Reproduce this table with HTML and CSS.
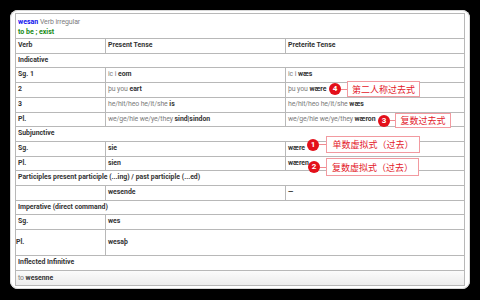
FILE: index.html
```html
<!DOCTYPE html>
<html>
<head>
<meta charset="utf-8">
<link rel="stylesheet" href="styles.css">
</head>
<body>
<div class="stage">
  <div class="panel">
    <div class="box">
      <div class="title">
        <div><span class="word">wesan</span> <span class="muted">Verb irregular</span></div>
        <div class="gloss">to be ; exist</div>
      </div>
      <table class="conj">
        <colgroup><col class="c1"><col class="c2"><col class="c3"></colgroup>
        <tr><td class="b">Verb</td><td class="b">Present Tense</td><td class="b">Preterite Tense</td></tr>
        <tr><td class="b" colspan="3">Indicative</td></tr>
        <tr><td class="b">Sg. 1</td><td><span class="muted">ic i</span> <b>eom</b></td><td><span class="muted">ic i</span> <b>wæs</b></td></tr>
        <tr><td class="b">2</td><td><span class="muted">þu you</span> <b>eart</b></td><td><span class="muted">þu you</span> <b>wære</b></td></tr>
        <tr><td class="b">3</td><td><span class="muted">he/hit/heo he/it/she</span> <b>is</b></td><td><span class="muted">he/hit/heo he/it/she</span> <b>wæs</b></td></tr>
        <tr><td class="b">Pl.</td><td><span class="muted">we/ge/hie we/ye/they</span> <b>sind|sindon</b></td><td><span class="muted">we/ge/hie we/ye/they</span> <b>wæron</b></td></tr>
        <tr><td class="b" colspan="3">Subjunctive</td></tr>
        <tr><td class="b">Sg.</td><td class="b">sie</td><td class="b">wære</td></tr>
        <tr><td class="b">Pl.</td><td class="b">sien</td><td class="b">wæren</td></tr>
        <tr><td class="b" colspan="3">Participles present participle (...ing) / past participle (...ed)</td></tr>
        <tr><td></td><td class="b">wesende</td><td class="b">—</td></tr>
        <tr><td class="b" colspan="3">Imperative (direct command)</td></tr>
        <tr><td class="b">Sg.</td><td class="b" colspan="2">wes</td></tr>
        <tr class="tall"><td class="b flush">Pl.</td><td class="b" colspan="2">wesaþ</td></tr>
        <tr><td class="b" colspan="3">Inflected Infinitive</td></tr>
        <tr class="foot"><td colspan="3"><span class="muted">to</span> <b>wesenne</b></td></tr>
      </table>
    </div>
  </div>

  <div class="note n4"><span class="dot">4</span><span class="wire"></span><span class="tag">第二人称过去式</span></div>
  <div class="note n3"><span class="dot">3</span><span class="wire"></span><span class="tag">复数过去式</span></div>
  <div class="note n1"><span class="dot">1</span><span class="wire"></span><span class="tag">单数虚拟式（过去）</span></div>
  <div class="note n2"><span class="dot">2</span><span class="wire"></span><span class="tag">复数虚拟式（过去）</span></div>
</div>
</body>
</html>
```

FILE: styles.css
```css
html, body {
  margin: 0;
  padding: 0;
  background: #000;
}
.stage {
  position: relative;
  width: 480px;
  height: 300px;
  overflow: hidden;
  font-family: Roboto, "Liberation Sans", Arial, sans-serif;
}
.panel {
  margin: 10px 0 0 10px;
  width: 460px;
  box-sizing: border-box;
  padding: 3px 4px 3px 5px;
  background: #fff;
  border-radius: 8px;
  box-shadow: inset 0 0 0 1px #d8d8d8;
}
.box {
  border: 1px solid #b8b8b8;
  width: 450px;
  box-sizing: border-box;
}
.title {
  padding: 4px 2px 1px;
  font-size: 7px;
  line-height: 9.5px;
}
.word { color: #1010ee; font-weight: 700; }
.gloss { color: #168a16; font-weight: 700; }
.muted { color: #7d7d7d; font-weight: 400; letter-spacing: -0.12px; }
.conj {
  width: 100%;
  border-collapse: separate;
  border-spacing: 0;
  font-size: 6.9px;
  table-layout: fixed;
}
.c1 { width: 89px; }
.c2 { width: 180px; }
.conj td {
  border-top: 1px solid #b8b8b8;
  padding: 0 2px;
  line-height: 13.7px;
  color: #333;
  white-space: nowrap;
  overflow: hidden;
}
.conj td + td { border-left: 1px solid #b8b8b8; }
.conj b, .conj .b { font-weight: 700; color: #333; }
.conj .tall td { line-height: 24.7px; }
.conj td.flush { padding-left: 0; }
.conj .foot td {
  line-height: 14px;
  background: linear-gradient(#fbfbfb, #ececec);
}

.note {
  position: absolute;
  display: flex;
  align-items: center;
}
.dot {
  width: 12px;
  height: 12px;
  border-radius: 50%;
  background: #e3101a;
  color: #fff;
  font-size: 8px;
  font-weight: 700;
  line-height: 12px;
  text-align: center;
  flex: none;
}
.wire {
  height: 1px;
  background: #f08a90;
  flex: none;
}
.tag {
  border: 1px solid #f29aa0;
  background: #fff;
  color: #e3202a;
  font-family: "Noto Sans CJK SC", sans-serif;
  font-size: 9px;
  box-sizing: border-box;
  display: flex;
  align-items: center;
  justify-content: center;
  flex: none;
}
.n4 { left: 329px; top: 81px; }
.n4 .wire { width: 6px; }
.n4 .tag { width: 73px; height: 16px; }
.n3 { left: 378px; top: 113px; }
.n3 .wire { width: 5px; }
.n3 .tag { width: 56px; height: 15px; }
.n1 { left: 307px; top: 136px; }
.n1 .wire { width: 7px; }
.n1 .tag { width: 94px; height: 17px; }
.n2 { left: 308px; top: 158px; }
.n2 .wire { width: 6px; }
.n2 .tag { width: 93px; height: 18px; }
```
